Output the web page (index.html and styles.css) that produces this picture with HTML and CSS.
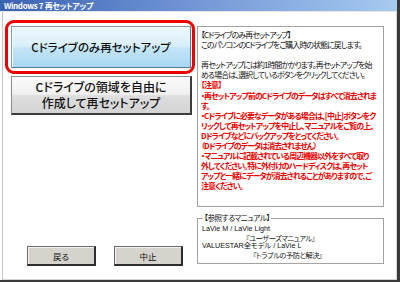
FILE: index.html
```html
<!DOCTYPE html>
<html lang="ja">
<head>
<meta charset="utf-8">
<link rel="stylesheet" href="styles.css">
</head>
<body>
<div class="window">
  <div class="titlebar">Windows 7 再セットアップ</div>
  <div class="client">
    <div class="leftcol">
      <div class="selected">
        <div class="bigbtn blue">Cドライブのみ再セットアップ</div>
      </div>
      <div class="bigbtn gray">Cドライブの領域を自由に<br>作成して再セットアップ</div>
      <div class="navrow">
        <div class="navbtn">戻る</div>
        <div class="navbtn">中止</div>
      </div>
    </div>
    <div class="rightcol">
      <div class="infobox">
        <div class="line">【Cドライブのみ再セットアップ】</div>
        <div class="line">このパソコンのCドライブをご購入時の状態に戻します。</div>
        <div class="line">&nbsp;</div>
        <div class="line">再セットアップには約1時間かかります。再セットアップを始</div>
        <div class="line">める場合は、選択しているボタンをクリックしてください。</div>
        <div class="line warn">【注意】</div>
        <div class="line warn">・再セットアップ前のCドライブのデータはすべて消去されま</div>
        <div class="line warn ind">す。</div>
        <div class="line warn">・Cドライブに必要なデータがある場合は、[中止]ボタンをク</div>
        <div class="line warn ind">リックして再セットアップを中止し、マニュアルをご覧の上、</div>
        <div class="line warn ind">Dドライブなどにバックアップをとってください。</div>
        <div class="line warn ind">（Dドライブのデータは消去されません）</div>
        <div class="line warn">・マニュアルに記載されている周辺機器以外をすべて取り</div>
        <div class="line warn ind">外してください。特に外付けのハードディスクは、再セット</div>
        <div class="line warn ind">アップと一緒にデータが消去されることがありますので、ご</div>
        <div class="line warn ind">注意ください。</div>
      </div>
      <fieldset class="manuals">
        <legend>【参照するマニュアル】</legend>
        <div class="mline">LaVie M / LaVie Light</div>
        <div class="mline sub1">『ユーザーズマニュアル』</div>
        <div class="mline">VALUESTAR全モデル / LaVie L</div>
        <div class="mline sub2">『トラブルの予防と解決』</div>
      </fieldset>
    </div>
  </div>
</div>
</body>
</html>
```
FILE: styles.css
```css
* { box-sizing: border-box; }
html, body { margin: 0; padding: 0; background: #fff; }
body {
  font-family: "Noto Sans CJK JP", "Liberation Sans", sans-serif;
  font-feature-settings: "palt";
}
.window {
  width: 400px;
  height: 282px;
  display: flex;
  flex-direction: column;
  background: #fff;
  border-right: 3px solid #3a3a3a;
  border-bottom: 2px solid #3a3a3a;
}
.titlebar {
  height: 12px;
  line-height: 12px;
  padding-left: 4px;
  color: #fff;
  font-weight: bold;
  font-size: 8px;
  letter-spacing: -0.35px;
  background: linear-gradient(to right, #3b62b2 0%, #6d93d4 45%, #a7caf0 100%);
  border-bottom: 1px solid #e6e6e6;
}
.client {
  flex: 1;
  display: flex;
  margin-left: 2px;
  border-left: 1px solid #c4c4c4;
  border-right: 1px solid #d4d4d4;
  border-bottom: 1px solid #d4d4d4;
  padding-left: 2px;
}
.leftcol {
  width: 190px;
  display: flex;
  flex-direction: column;
  padding-top: 8px;
}
.selected {
  height: 54px;
  border: 3px solid #ee0000;
  border-radius: 9px;
  padding: 3px 2px 2px 3px;
}
.bigbtn {
  display: flex;
  align-items: center;
  justify-content: center;
  text-align: center;
  color: #111;
  font-size: 11.5px;
  line-height: 16px;
  font-weight: 500;
}
.blue {
  height: 42px;
  width: 180px;
  border: 1px solid #7d98b0;
  border-right-color: #5d7894;
  border-bottom-color: #5d7894;
  box-shadow: inset 1px 1px 0 #ffffff;
  background: linear-gradient(#eef8fe 0%, #d8eefb 48%, #c4e5f8 52%, #a9d7f3 100%);
}
.gray {
  margin-top: 2px;
  margin-left: 6px;
  width: 181px;
  height: 39px;
  font-size: 12px;
  line-height: 16px;
  border: 1px solid #8c8c8c;
  border-right: 2px solid #3c3c3c;
  border-bottom: 2px solid #3c3c3c;
  background: linear-gradient(#fbfbfb 0%, #f0f0f0 48%, #dedede 52%, #d4d4d4 100%);
}
.navrow {
  margin-top: auto;
  margin-bottom: 13px;
  display: flex;
  gap: 18px;
  padding-left: 22px;
}
.navbtn {
  width: 69px;
  height: 20px;
  display: flex;
  align-items: center;
  justify-content: center;
  font-size: 8.5px;
  color: #111;
  background: #d6d3cc;
  border: 1px solid #6a6a6a;
  border-right: 2px solid #2e2e2e;
  border-bottom: 2px solid #2e2e2e;
  box-shadow: inset 1px 1px 0 #f4f4f4;
}
.rightcol {
  width: 187px;
  margin-left: 2px;
  display: flex;
  flex-direction: column;
  padding-top: 14px;
}
.infobox {
  height: 181px;
  border: 1px solid #a3a3a3;
  padding: 3px 0 0 3px;
  font-size: 7.9px;
  letter-spacing: -0.88px;
  line-height: 10.1px;
  color: #111;
  white-space: nowrap;
  overflow: hidden;
}
.line { height: 10.1px; }
.warn { color: #f00000; font-weight: bold; }
.manuals {
  margin: 6px 0 0 0;
  padding: 2px 0 1px 4px;
  border: 1px solid #a3a3a3;
  height: 51px;
  font-size: 7.2px;
  line-height: 8.5px;
  color: #111;
  font-family: "Liberation Sans", "Noto Sans CJK JP", sans-serif;
}
.manuals legend {
  padding: 0 1px;
  margin-left: 1px;
  font-size: 7.6px;
  letter-spacing: -0.4px;
  line-height: 10px;
  font-family: "Noto Sans CJK JP", sans-serif;
}
.mline { white-space: nowrap; height: 8.5px; }
.sub1 { padding-left: 44px; font-family: "Noto Sans CJK JP", sans-serif; letter-spacing: -0.4px; }
.sub2 { padding-left: 51px; font-family: "Noto Sans CJK JP", sans-serif; letter-spacing: -0.4px; }
```
